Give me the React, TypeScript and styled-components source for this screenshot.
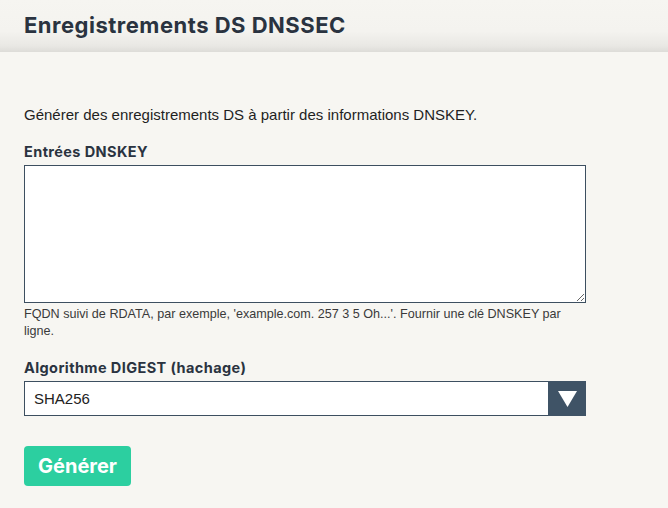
import React from "react";
import styled, { createGlobalStyle } from "styled-components";

const GlobalStyle = createGlobalStyle`
  html, body {
    margin: 0;
    padding: 0;
    background: #f7f6f2;
  }
  body {
    font-family: "Liberation Sans", Arial, sans-serif;
    color: #222;
  }
`;

const Header = styled.header`
  height: 52px;
  padding: 0 24px;
  display: flex;
  align-items: center;
  background: linear-gradient(
    to bottom,
    #f6f5f1 0%,
    #f4f3ef 60%,
    #e9e8e4 88%,
    #dddcd8 100%
  );
`;

const Title = styled.h1`
  margin: 0 0 2px;
  font-family: Inter, "Open Sans", sans-serif;
  font-weight: 700;
  font-size: 22px;
  letter-spacing: 0.5px;
  color: #2a3340;
`;

const Content = styled.main`
  padding: 54px 24px 20px;
  width: 562px;
`;

const Intro = styled.p`
  margin: 0 0 19px;
  font-size: 15px;
  line-height: 18px;
  color: #1f1f1f;
`;

const Field = styled.div`
  display: flex;
  flex-direction: column;
  margin-bottom: ${({ $gap }: { $gap?: number }) => $gap ?? 0}px;
`;

const Label = styled.label`
  font-family: Inter, "Open Sans", sans-serif;
  font-weight: 700;
  font-size: 14.5px;
  letter-spacing: 0.4px;
  line-height: 18px;
  color: #2a3340;
  margin-bottom: 4px;
`;

const TextArea = styled.textarea`
  box-sizing: border-box;
  width: 562px;
  height: 138px;
  margin: 0;
  border: 1px solid #3d4f60;
  border-radius: 0;
  background: #fff;
  display: block;
  resize: vertical;
  font-family: "Liberation Sans", Arial, sans-serif;
  font-size: 14px;
`;

const Help = styled.p`
  margin: 3px 0 0;
  font-size: 12.6px;
  line-height: 17px;
  color: #3a3a3a;
`;

const SelectWrap = styled.div`
  position: relative;
  width: 562px;
  height: 35px;
`;

const Select = styled.select`
  box-sizing: border-box;
  width: 100%;
  height: 100%;
  margin: 0;
  padding: 0 9px;
  border: 1px solid #3d4f60;
  border-radius: 0;
  background: #fff;
  appearance: none;
  font-family: "Liberation Sans", Arial, sans-serif;
  font-size: 15px;
  color: #222;
`;

const Arrow = styled.span`
  position: absolute;
  top: 0;
  right: 0;
  width: 38px;
  height: 100%;
  background: #3f5366;
  display: flex;
  align-items: center;
  justify-content: center;
  pointer-events: none;
`;

const Button = styled.button`
  margin-top: 30px;
  height: 40px;
  padding: 0 14px;
  border: none;
  border-radius: 4px;
  background: #2ccfa0;
  color: #fff;
  font-family: Inter, "Open Sans", sans-serif;
  font-weight: 700;
  font-size: 20px;
  cursor: pointer;
`;

const App: React.FC = () => {
  return (
    <>
      <GlobalStyle />
      <Header>
        <Title>Enregistrements DS DNSSEC</Title>
      </Header>
      <Content>
        <Intro>
          Générer des enregistrements DS à partir des informations DNSKEY.
        </Intro>
        <Field $gap={19}>
          <Label htmlFor="dnskey">Entrées DNSKEY</Label>
          <TextArea id="dnskey" />
          <Help>
            FQDN suivi de RDATA, par exemple, 'example.com. 257 3 5 Oh...'.
            Fournir une clé DNSKEY par ligne.
          </Help>
        </Field>
        <Field>
          <Label htmlFor="digest">Algorithme DIGEST (hachage)</Label>
          <SelectWrap>
            <Select id="digest" defaultValue="SHA256">
              <option value="SHA1">SHA1</option>
              <option value="SHA256">SHA256</option>
              <option value="SHA384">SHA384</option>
            </Select>
            <Arrow>
              <svg width="19" height="16" viewBox="0 0 19 16">
                <polygon points="0,0 19,0 9.5,16" fill="#fff" />
              </svg>
            </Arrow>
          </SelectWrap>
        </Field>
        <Button type="button">Générer</Button>
      </Content>
    </>
  );
};

export default App;
